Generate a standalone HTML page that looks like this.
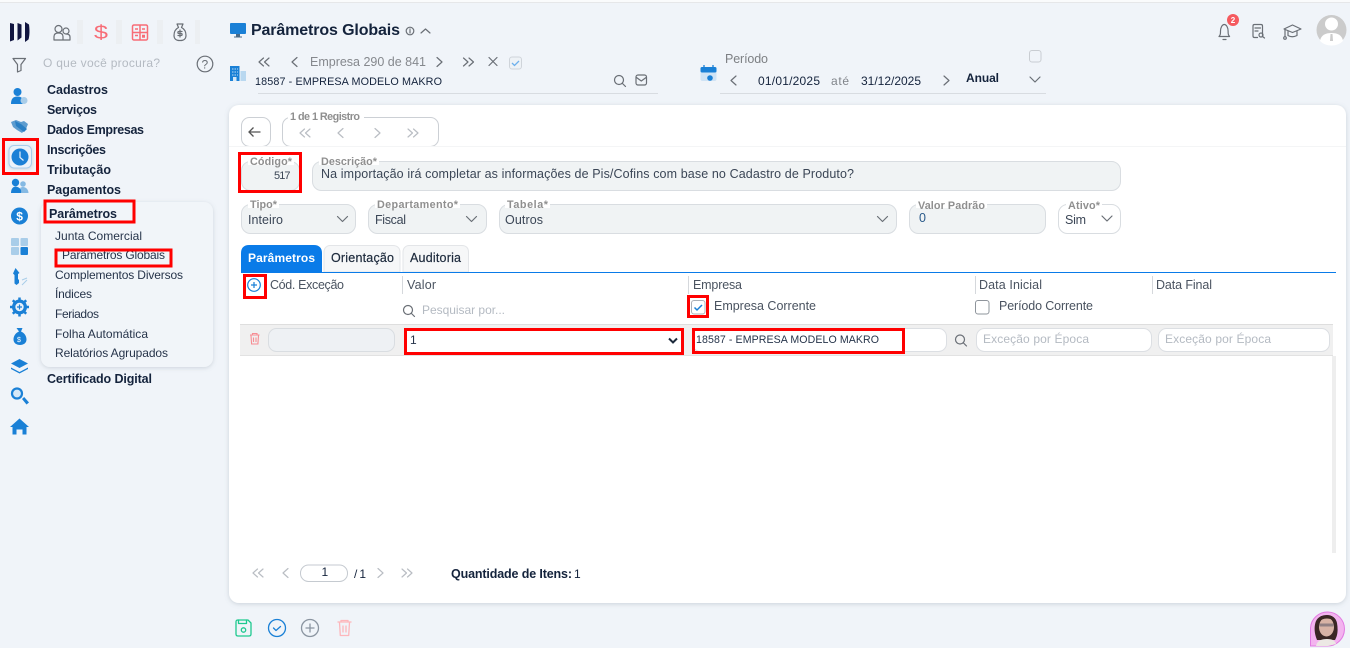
<!DOCTYPE html>
<html lang="pt-BR"><head><meta charset="utf-8"><title>Parâmetros Globais</title>
<style>
html,body{margin:0;padding:0;width:1350px;height:648px;overflow:hidden;background:#f0f4f9}
svg{display:block;font-family:"Liberation Sans",sans-serif}
text{white-space:pre}
.b{font-weight:700;fill:#14233c;font-size:12.5px}
.s{font-size:12px;fill:#26344a}
.l{font-weight:700;fill:#8f8f8f;font-size:10.8px}
.v{font-size:12.5px;fill:#3b4656}
.h{font-size:12.5px;fill:#4a5360}
.p{font-size:12px;fill:#b4bac2}
.ln{fill:none;stroke:#6a6f76;stroke-width:1.2;stroke-linecap:round;stroke-linejoin:round}
.lt{fill:none;stroke:#b9bdc3;stroke-width:1.2;stroke-linecap:round;stroke-linejoin:round}
.box{fill:#f0f3f4;stroke:#d9dde1;stroke-width:1}
.red{fill:none;stroke:#f00;stroke-width:3}
.sep{fill:#eceff2}
</style></head><body>
<svg width="1350" height="648" viewBox="0 0 1350 648" xmlns="http://www.w3.org/2000/svg">
<defs>
<filter id="sh" x="-5%" y="-5%" width="110%" height="110%"><feDropShadow dx="0" dy="1" stdDeviation="2.5" flood-color="#7a8797" flood-opacity=".32"/></filter>
<filter id="sh2" x="-10%" y="-10%" width="120%" height="120%"><feDropShadow dx="0" dy="1" stdDeviation="2" flood-color="#7a8797" flood-opacity=".3"/></filter>
<path id="cl" d="M3-4.5L-2 0 3 4.5"/>
<path id="cr" d="M-3-4.5L2 0-3 4.5"/>
<path id="dl" d="M-.5-4-5 0-.5 4M5-4 .5 0 5 4"/>
<path id="dr" d="M-5-4-.5 0-5 4M.5-4 5 0 .5 4"/>
<path id="cd" d="M-5-2.5L0 2.5 5-2.5"/>
<g id="mag"><circle cx="-1" cy="-1" r="4.500" fill="none"/><path d="M2.500 2.500L5.500 5.500" fill="none"/></g>
</defs>

<rect width="1350" height="648" fill="#f0f4f9"/>
<rect width="1350" height="2" fill="#fafbfc"/><rect y="2" width="1350" height="1" fill="#e6e7e9"/>

<!-- logo + top icons -->
<g fill="#101540">
<path d="M10 23l4 1v16l-4 1.500z"/>
<path d="M17.500 23l4 1.500v13l-4 3z"/><path d="M25 22l4 2.500c.8 6 .6 11-.5 15l-3.500 2.500z"/>
</g>
<rect class="sep" x="77" y="20" width="6" height="24"/><rect class="sep" x="116" y="20" width="6" height="24"/><rect class="sep" x="157" y="20" width="6" height="24"/><rect class="sep" x="195" y="20" width="5" height="24"/>
<g class="ln"><circle cx="58.500" cy="29" r="3.500"/><circle cx="66" cy="31" r="3"/><path d="M54 40v-3.500c0-2.500 2-3.500 4.500-3.500s4.500 1 4.500 3.500V40zM63 40h7v-3c0-2-1.500-3-4-3"/></g>
<text x="94" y="39" font-size="19" fill="#f76d77" textLength="14" lengthAdjust="spacingAndGlyphs">$</text>
<g fill="none" stroke="#f76d77" stroke-width="1.500"><rect x="132.500" y="25" width="15" height="15" rx="1.500"/><path d="M132.500 32.500h15M140 25v15"/><path d="M135 29h3M142 29h3M142 35.500h3M135 35.500h3M142 37h3"/></g>
<g class="ln"><path d="M177 24h6l-1.500 3.500c3 1.500 4.500 4.500 4.500 8 0 3-2 5-5.500 5h-1c-3.500 0-5.500-2-5.500-5 0-3.500 1.500-6.500 4.500-8z"/><path d="M180 30v7M182 31.500h-3c-1.500 0-1.500 2 0 2h2c1.500 0 1.500 2 0 2h-3"/></g>
<path class="ln" d="M13 58.500h12.500l-4.500 6v6l-3.500 1.500v-7.500z"/>
<text x="43" y="67" class="p" textLength="117">O que você procura?</text>
<circle cx="205" cy="64" r="7.800" class="ln"/><text x="201.500" y="68.500" font-size="12" fill="#6a6f76">?</text>

<!-- left icons -->
<g fill="#1a80d6">
<circle cx="17.500" cy="92" r="4"/><path d="M11 104c0-5 2-7.500 6.500-7.500 2 0 3.500.5 4.500 1.500-1.500 2-1 4.500 1 6z"/><circle cx="24" cy="100.500" r="3.500" fill="#a9cde9"/>
<path d="M11 122l5-2 5 2 3-1 4 3-2 5-4 4-5-3-4-3z" fill="#5d9ccf"/><path d="M15 121l6 3 6 5-3 3-8-6z" fill="#2a7fc4"/>
<rect x="9" y="145.500" width="22.500" height="22.500" rx="5" fill="#eaf2fa" stroke="#a8cdec" filter="url(#sh2)"/>
<circle cx="20" cy="157" r="8.500"/>
<circle cx="15.500" cy="182.500" r="3.700"/><path d="M11 193c0-4 2-6.500 4.500-6.500S22 189 22 193z"/><circle cx="23" cy="184" r="2.800" fill="#85b9e3"/><path d="M21 193h7.500c0-3.500-2.500-6-5.500-6-1 0-2 .3-3 1 1 1.500 1.500 3 1 5z" fill="#85b9e3"/>
<circle cx="19.500" cy="216" r="8.500"/>
<rect x="11" y="238" width="8" height="8" rx="1" fill="#a9cde9"/><rect x="20.500" y="238" width="7.500" height="8" rx="1" fill="#a9cde9"/><rect x="11" y="247" width="8" height="8" rx="1" fill="#a9cde9"/><rect x="20.500" y="247" width="7.500" height="8" rx="1"/>
<path d="M15.500 268l4 5-1.500 1v5l1 1v3l-2.500 2-2-1.500v-8.500l-1.500-1.500z"/><path d="M22 280l5-2M22 285l5-5" stroke="#a9cde9" fill="none"/>
<circle cx="19.500" cy="307" r="7.500"/><g stroke="#1a80d6" stroke-width="2.500"><path d="M19.500 297.500v19M10 307h19M12.800 300.300l13.400 13.400M26.200 300.300l-13.400 13.400"/></g>
<path d="M16.500 328h6l-1.500 3.500c3.500 1.500 5.500 4.500 5.500 8 0 3.500-3 5.500-6.500 5.500s-6.500-2-6.500-5.500c0-3.500 2-6.500 5.500-8z"/>
<path d="M19.500 359l8.500 4.500-8.500 4.500-8.500-4.500z"/><path d="M11 367.500l8.500 4.500 8.500-4.500v1.500l-8.500 4.500-8.500-4.500z"/>
<path d="M22 399l2.200-2 4.800 5.500-2.500 2z"/>
<path d="M19.500 418.500l9.500 8.500h-2.500v7.500h-4v-5h-6v5h-4V427H10z"/>
</g>
<path d="M20 151.500v6l3.500 3" fill="none" stroke="#e6f1fb" stroke-width="1.200"/>
<text x="16.200" y="220.500" font-size="12" font-weight="700" fill="#fff">$</text>
<circle cx="19.500" cy="307" r="4.200" fill="#eaf2fa"/><path d="M19.500 304.500v5M17 307h5" stroke="#1a80d6" stroke-width="1.200"/>
<circle cx="17" cy="393.500" r="5" fill="#d6e8f7" stroke="#1a80d6" stroke-width="2.200"/>
<text x="17" y="342" font-size="7" fill="#fff">$</text>
<rect class="red" x="3.500" y="139.500" width="34" height="34"/>

<!-- menu -->
<text class="b" x="47" y="94" textLength="61">Cadastros</text>
<text class="b" x="47" y="114" textLength="50">Serviços</text>
<text class="b" x="47" y="134" textLength="97">Dados Empresas</text>
<text class="b" x="47" y="154" textLength="59">Inscrições</text>
<text class="b" x="47" y="174" textLength="64">Tributação</text>
<text class="b" x="47" y="194" textLength="74">Pagamentos</text>
<rect x="41" y="202" width="172" height="165" rx="9" fill="#f1f5f9" filter="url(#sh2)"/>
<text class="b" x="49" y="218" textLength="68">Parâmetros</text>
<text class="s" x="55" y="240" textLength="87">Junta Comercial</text>
<text class="s" x="62" y="259" textLength="103">Parâmetros Globais</text>
<text class="s" x="55" y="279" textLength="128">Complementos Diversos</text>
<text class="s" x="55" y="298" textLength="37">Índices</text>
<text class="s" x="55" y="318" textLength="44">Feriados</text>
<text class="s" x="55" y="338" textLength="93">Folha Automática</text>
<text class="s" x="55" y="357" textLength="113">Relatórios Agrupados</text>
<text class="b" x="47" y="383" textLength="105">Certificado Digital</text>
<rect class="red" x="45" y="201" width="89" height="21"/>
<rect class="red" x="56" y="250" width="115" height="16"/>

<!-- header -->
<rect x="230" y="23" width="16" height="11" rx="1" fill="#1a80d6"/><path d="M236 34h4v2.500h2v1h-8v-1h2z" fill="#4a6a86"/>
<text x="251" y="35" font-size="16" font-weight="700" fill="#14233c" textLength="149">Parâmetros Globais</text>
<circle cx="410" cy="31" r="3.800" class="ln" stroke-width="1"/><path d="M410 30.500v2.500M410 29v.4" class="ln"/>
<path class="ln" d="M421 33l4.500-4 4.500 4"/>
<g class="ln"><use href="#dl" x="264" y="62"/><use href="#cl" x="294" y="62"/><use href="#cr" x="440" y="62"/><use href="#dr" x="468.500" y="62"/><path d="M489 57.500l8 8M497 57.500l-8 8"/></g>
<text x="310" y="66" font-size="12.500" fill="#85888d" textLength="116">Empresa 290 de 841</text>
<rect x="509.500" y="57" width="12" height="12" rx="2.500" fill="#eef2f6" stroke="#cfd4da"/><path d="M512 63l2.500 2.500 4.500-4.500" fill="none" stroke="#6db0ec" stroke-width="1.300"/>
<path d="M230 66h9.500v15H230z" fill="#1a80d6"/><path d="M240.500 71h5.500v10h-5.500z" fill="#b9d8f0"/><path d="M232 69h6M232 72h6M232 75h6" stroke="#bcdcf4" stroke-dasharray="1.500 1"/><rect x="233" y="77" width="3.500" height="4" fill="#d6e8f7"/>
<text x="255" y="85" font-size="10.800" fill="#14233c" textLength="187">18587 - EMPRESA MODELO MAKRO</text>
<use href="#mag" x="620" y="81" class="ln"/>
<g class="ln"><rect x="636" y="75" width="10.500" height="10" rx="2"/><path d="M636.500 77.500l4.800 3.500 4.800-3.500"/></g>
<rect x="258" y="93" width="400" height="1" fill="#d8dce1"/>

<!-- period -->
<rect x="700.500" y="68" width="16" height="13" rx="2" fill="#cfe3f5"/><rect x="700.500" y="67" width="16" height="5.500" rx="1.500" fill="#1a80d6"/><path d="M704 65v3M713 65v3" stroke="#1a80d6" stroke-width="1.300"/><circle cx="710" cy="78" r="2.800" fill="#1a80d6"/>
<text x="725" y="63" font-size="12.500" fill="#7d8084" textLength="43">Período</text>
<rect x="1029.500" y="50.500" width="11.500" height="11.500" rx="2.500" fill="#f0f4f9" stroke="#c9cdd2"/>
<g class="ln"><use href="#cl" x="733" y="80.500"/><use href="#cr" x="947" y="80.500"/><use href="#cd" x="1035" y="79.500"/></g>
<text x="758" y="85" font-size="12" fill="#14233c" textLength="62">01/01/2025</text>
<text x="831" y="85" font-size="12" fill="#80848a" textLength="18">até</text>
<text x="861" y="85" font-size="12" fill="#14233c" textLength="60">31/12/2025</text>
<text x="966" y="82" font-size="12" font-weight="700" fill="#14233c" textLength="33">Anual</text>
<rect x="720" y="93" width="326" height="1" fill="#d8dce1"/>

<!-- top right -->
<g class="ln"><path d="M1219 36.500c1.500-1.500 1.500-3 1.500-5.500 0-3 1.500-6.500 3.800-6.500s3.800 3.500 3.800 6.500c0 2.500 0 4 1.500 5.500z"/><path d="M1223 39.500h3"/></g>
<circle cx="1233" cy="20" r="6" fill="#f55a5f"/><text x="1230.800" y="23" font-size="8" font-weight="700" fill="#fff">2</text>
<g class="ln"><path d="M1262.500 36v-10c0-1-.5-1.500-1.500-1.500h-6.500c-1 0-1.500.5-1.500 1.500v10c0 1 .5 1.500 1.500 1.500h3"/><path d="M1255 28h5.500M1255 31h3"/><circle cx="1261" cy="35" r="2"/><path d="M1262.500 36.500l2 1.500"/></g>
<g class="ln"><path d="M1284 29l8.500-4 8.500 4-8.500 3.500z"/><path d="M1288 31.500v4c2.500 1.500 6 1.500 9 0v-4"/><path d="M1285 29.500v7"/><circle cx="1285" cy="38" r="1.300"/></g>
<circle cx="1331.500" cy="30" r="15" fill="#cbcbcb"/><circle cx="1331.500" cy="24" r="6.500" fill="#fff"/><path d="M1320 41c1-6 5.500-8 11.500-8s10.500 2 11.500 8c-3 3-7 4.500-11.500 4.500s-8.500-1.500-11.500-4.500z" fill="#fff"/><path d="M1330.500 34h2l.5 7h-3z" fill="#cbcbcb"/>

<!-- main card -->
<rect x="229" y="105" width="1117" height="498" rx="10" fill="#fff" filter="url(#sh)"/>
<rect x="241.500" y="117.500" width="29" height="29" rx="8" fill="#fff" stroke="#ccd0d5"/>
<path d="M260.500 132h-11M253.500 127.500l-4.500 4.500 4.500 4.500" fill="none" stroke="#555" stroke-width="1.300"/>
<rect x="282.500" y="117.500" width="156" height="29" rx="8" fill="#fff" stroke="#ccd0d5"/>
<rect x="288" y="114" width="76" height="8" fill="#fff"/>
<text class="l" x="290" y="120" textLength="70">1 de 1 Registro</text>
<g class="lt"><use href="#dl" x="305" y="133"/><use href="#cl" x="340" y="133"/><use href="#cr" x="378" y="133"/><use href="#dr" x="413" y="133"/></g>
<rect x="229" y="146" width="1117" height="1" fill="#f4f5f6"/>

<!-- fields -->
<rect class="box" x="241.500" y="161.500" width="58" height="29" rx="9"/>
<rect x="248" y="157" width="46" height="8" fill="#fff"/><text class="l" x="250" y="165" textLength="42">Código*</text>
<text x="274" y="179" font-size="11" fill="#3b4656" textLength="16.500">517</text>
<rect class="box" x="312.500" y="161.500" width="808" height="29" rx="9"/>
<rect x="319" y="157" width="60" height="8" fill="#fff"/><text class="l" x="321" y="165" textLength="56">Descrição*</text>
<text class="v" x="321" y="178" textLength="533">Na importação irá completar as informações de Pis/Cofins com base no Cadastro de Produto?</text>

<rect class="box" x="241.500" y="204.500" width="114" height="29" rx="9"/>
<rect x="248" y="200" width="31" height="8" fill="#fff"/><text class="l" x="250" y="208" textLength="27">Tipo*</text>
<text class="v" x="248" y="224" textLength="35">Inteiro</text>
<rect class="box" x="368.500" y="204.500" width="118" height="29" rx="9"/>
<rect x="375" y="200" width="85" height="8" fill="#fff"/><text class="l" x="377" y="208" textLength="81">Departamento*</text>
<text class="v" x="375" y="224" textLength="31">Fiscal</text>
<rect class="box" x="499.500" y="204.500" width="397" height="29" rx="9"/>
<rect x="505" y="200" width="45" height="8" fill="#fff"/><text class="l" x="507" y="208" textLength="41">Tabela*</text>
<text class="v" x="505" y="224" textLength="38">Outros</text>
<rect class="box" x="909.500" y="204.500" width="136" height="29" rx="9"/>
<rect x="916" y="200" width="71" height="8" fill="#fff"/><text class="l" x="918" y="209" textLength="67">Valor Padrão</text>
<text class="v" x="919" y="222" style="fill:#2a5a8a">0</text>
<rect x="1058.500" y="204.500" width="62" height="29" rx="9" fill="#fff" stroke="#d9dde1"/>
<rect x="1066" y="200" width="36" height="8" fill="#fff"/><text class="l" x="1068" y="209" textLength="32">Ativo*</text>
<text class="v" x="1065" y="224" textLength="21">Sim</text>
<g class="ln"><use href="#cd" x="342.500" y="219"/><use href="#cd" x="471.500" y="219"/><use href="#cd" x="882.500" y="219"/><use href="#cd" x="1107" y="218.500"/></g>
<rect class="red" x="239.500" y="153.500" width="61" height="38"/>

<!-- tabs -->
<path d="M241 272v-19c0-5 3-8 8-8h65c5 0 8 3 8 8v19z" fill="#0a7be8"/>
<path d="M324 272v-20c0-4 3-6.500 6-6.500h63c4 0 7 2.500 7 6.500v20z" fill="#f6f7f8" stroke="#e3e5e8"/>
<path d="M403 272v-20c0-4 3-6.500 6-6.500h53c4 0 6.500 2.500 6.500 6.500v20z" fill="#f6f7f8" stroke="#e3e5e8"/>
<text x="248" y="262" font-size="12" font-weight="700" fill="#fff" textLength="67">Parâmetros</text>
<text x="331" y="262" font-size="12.500" fill="#1d2a3c" textLength="63" stroke="#1d2a3c" stroke-width=".2">Orientação</text>
<text x="410" y="262" font-size="12.500" fill="#1d2a3c" textLength="51" stroke="#1d2a3c" stroke-width=".2">Auditoria</text>
<rect x="241" y="272" width="1095" height="1" fill="#0a7be8"/>

<!-- grid header -->
<circle cx="254" cy="285" r="6.300" fill="none" stroke="#1a80d6" stroke-width="1.200"/><path d="M254 282v6M251 285h6" stroke="#1a80d6" stroke-width="1.200"/>
<rect class="red" x="244.500" y="275.500" width="21" height="22"/>
<text class="h" x="270" y="289" textLength="74">Cód. Exceção</text>
<g fill="#d5d8dc"><rect x="402" y="276" width="1" height="18"/><rect x="688" y="276" width="1" height="18"/><rect x="975" y="276" width="1" height="18"/><rect x="1152" y="276" width="1" height="18"/></g>
<text class="h" x="407" y="289" textLength="29">Valor</text>
<text class="h" x="693" y="289" textLength="49">Empresa</text>
<text class="h" x="979" y="289" textLength="63">Data Inicial</text>
<text class="h" x="1156" y="289" textLength="56">Data Final</text>
<use href="#mag" x="409" y="311" class="ln"/>
<text class="p" x="422" y="314" textLength="83">Pesquisar por...</text>
<rect x="691.500" y="300.500" width="13.500" height="13.500" rx="2.500" fill="#fff" stroke="#aab0b7"/><path d="M694.500 307.500l2.500 2.500 5-5" fill="none" stroke="#1a80d6" stroke-width="1.500"/>
<rect class="red" x="688.500" y="296.500" width="19" height="20"/>
<text class="h" x="714" y="310" textLength="102">Empresa Corrente</text>
<rect x="975.500" y="300.500" width="13.500" height="13.500" rx="2.500" fill="#fff" stroke="#8e949b"/>
<text class="h" x="999" y="310" textLength="94">Período Corrente</text>

<!-- grid row -->
<rect x="240" y="324" width="1093" height="32" fill="#f0f0f0"/><rect x="240" y="324" width="1093" height="1" fill="#dedede"/><rect x="240" y="355" width="1093" height="1" fill="#e2e2e2"/>
<g fill="none" stroke="#f78d93" stroke-width="1.100"><path d="M250 335h9.500M252.500 335v-1.500h4.500v1.500M251 335.500l.6 8.500h6.300l.6-8.500M253.500 337.500v4.500M256 337.500v4.500"/></g>
<rect x="268.500" y="328.500" width="126" height="23" rx="8" fill="#eef1f4" stroke="#d9dde1"/>
<rect x="405" y="329" width="278" height="24" fill="#fff"/>
<text class="s" x="410" y="344">1</text>
<path d="M669 338.500l4 4 4-4" fill="none" stroke="#1d2a3c" stroke-width="2"/>
<rect class="red" x="405.500" y="329.500" width="277" height="24"/>
<rect x="692.500" y="328.500" width="254" height="23" rx="8" fill="#fff" stroke="#dcdfe3"/>
<text x="696" y="343" font-size="10.600" fill="#26344a" textLength="183">18587 - EMPRESA MODELO MAKRO</text>
<rect class="red" x="693.500" y="329.500" width="210" height="23"/>
<use href="#mag" x="961" y="340.500" class="ln"/>
<rect x="976.500" y="328.500" width="175" height="23" rx="8" fill="#fff" stroke="#dcdfe3"/>
<rect x="1158.500" y="328.500" width="171" height="23" rx="8" fill="#fff" stroke="#dcdfe3"/>
<text class="p" x="983" y="343" textLength="106">Exceção por Época</text>
<text class="p" x="1165" y="343" textLength="106">Exceção por Época</text>
<rect x="1332" y="356" width="4" height="197" fill="#eeeeee"/>

<!-- pagination -->
<g class="lt"><use href="#dl" x="258" y="573"/><use href="#cl" x="285" y="573"/><use href="#cr" x="381" y="573"/><use href="#dr" x="407" y="573"/></g>
<rect x="300.500" y="565" width="47" height="16.500" rx="8" fill="#fff" stroke="#c5cad0"/>
<text class="s" x="321.500" y="576" style="fill:#14233c">1</text>
<text x="354" y="578" font-size="12" fill="#14233c" textLength="12">/ 1</text>
<text class="b" x="451" y="578" textLength="121">Quantidade de Itens:</text>
<text class="s" x="574" y="578" style="fill:#14233c">1</text>

<!-- bottom actions -->
<g fill="none" stroke-width="1.300" stroke-linecap="round" stroke-linejoin="round">
<path d="M238 620h10l3 3v11c0 1-.5 2-2 2h-11c-1.500 0-2-1-2-2v-12c0-1.500.5-2 2-2z" stroke="#1ec98f"/><path d="M238.500 620v3.500h8V620" stroke="#1ec98f"/><circle cx="243.500" cy="630" r="2.200" stroke="#1ec98f"/>
<circle cx="277" cy="628" r="8.500" stroke="#1a80d6"/><path d="M273.500 628l2.500 2.500 4.500-4" stroke="#1a80d6"/>
<circle cx="310" cy="628" r="8.500" stroke="#8b95a1"/><path d="M310 624v8M306 628h8" stroke="#8b95a1"/>
<path d="M338 622h13M341 622v-1.500h7v1.500M339.500 622.500l.8 13h8.400l.8-13M343 626v6M346 626v6" stroke="#fdb6bb"/>
</g>

<!-- assistant avatar -->
<path d="M1310.500 646v-18a17 17 0 1 1 17 18z" fill="#f3b4ef" stroke="#e27be2"/>
<path d="M1317 640c-3-7-3-14-1-19 2-4 6-6 11-6s9 3 10 8c1 6 1 12-2 17z" fill="#3a2724"/>
<ellipse cx="1326.500" cy="627" rx="7.500" ry="9.500" fill="#d8b3a5"/>
<path d="M1319 622c2-3 8-5 14-2l-1-4h-11z" fill="#3a2724"/>
<path d="M1319.500 623.500h14v3h-14z" fill="#6d6670" opacity=".65"/>
<path d="M1316 646c1-5 5-7 11-7s8 2 9 5l-8 2z" fill="#ece8e4"/>
</svg>
</body></html>
